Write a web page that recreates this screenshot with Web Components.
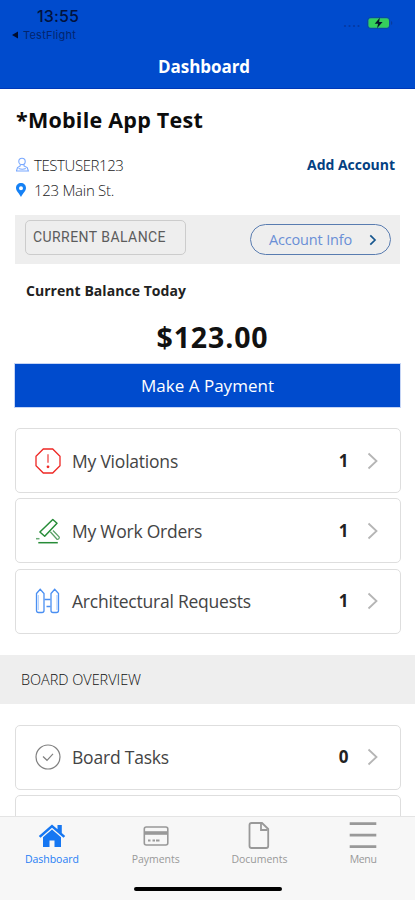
<!DOCTYPE html>
<html lang="en">
<head>
<meta charset="utf-8">
<title>Dashboard</title>
<style>
html,body{margin:0;height:100%;overflow:hidden;background:#fff}
</style>
</head>
<body>
<mobile-app></mobile-app>
<script>
const define = (name, html, Base = HTMLElement) => {
  const t = document.createElement('template');
  t.innerHTML = html;
  customElements.define(name, class extends Base {
    constructor() {
      super();
      this.attachShadow({ mode: 'open' }).append(t.content.cloneNode(true));
    }
  });
};

// One line of text whose tracking is adjusted to fill the width given in "w".
customElements.define('fit-text', class extends HTMLElement {
  constructor() {
    super();
    this.attachShadow({ mode: 'open' }).innerHTML = `<style>
  :host{display:block;white-space:nowrap;flex:none}
  span{display:inline-block}
</style><span><slot></slot></span>`;
  }
  connectedCallback() {
    const w = +this.getAttribute('w');
    this.style.width = w + 'px';
    const s = this.shadowRoot.querySelector('span');
    const n = this.shadowRoot.querySelector('slot').assignedNodes({ flatten: true })
      .reduce((a, x) => a + x.textContent.length, 0);
    if (n) s.style.letterSpacing = ((w - s.getBoundingClientRect().width) / n) + 'px';
  }
});

define('status-bar', `<style>
  :host{display:flex;justify-content:space-between;height:45px;color:#02123c;font-family:Inter,sans-serif}
  .l{padding:6px 0 0 12px}
  .time{font-size:16px;line-height:20px;font-weight:500;padding-left:25px}
  .back{display:flex;align-items:center;gap:5px;font-size:11px;line-height:18px}
  .back fit-text{color:#03256e}
  .r{display:flex;align-items:center;gap:6px;padding:0 22px 0 0;height:46px}
</style>
<div class="l">
  <fit-text class="time" w="42">13:55</fit-text>
  <div class="back"><svg width="6" height="8" viewBox="0 0 6 8"><path d="M6 .5v7L0 4z" fill="#000c2c"/></svg><fit-text w="53">TestFlight</fit-text></div>
</div>
<div class="r">
  <svg width="18" height="4" viewBox="0 0 18 4" fill="#0538a0" style="margin-top:6px"><circle cx="2" cy="2" r="1.1"/><circle cx="6.5" cy="2" r="1.1"/><circle cx="11" cy="2" r="1.1"/><circle cx="15.5" cy="2" r="1.1"/></svg>
  <svg width="26" height="12" viewBox="0 0 26 12"><rect x=".6" y=".6" width="22" height="10.8" rx="3" fill="none" stroke="#0b4a9c"/><rect x="1.4" y="1.2" width="20.6" height="9.6" rx="2.2" fill="#35cf5b"/><path d="M24.1 4v4q1.2-.6 1.2-2t-1.2-2z" fill="#0a3a98"/><path d="M12.8.8 7.7 6.7h3.4L10 11.2l5.6-6.3h-3.5z" fill="#06132b"/></svg>
</div>`);

define('app-header', `<style>
  :host{display:block;height:88.500px;background:#004bcd;box-sizing:border-box;border-bottom:1px solid #0038b8}
  .t{display:flex;justify-content:center;color:#fff;font:700 17px/44px "Open Sans",sans-serif;padding-right:7px}
</style><status-bar></status-bar><div class="t"><fit-text w="92"><slot></slot></fit-text></div>`);

define('account-summary', `<style>
  :host{display:block;padding:14px 20px 0 16px;height:112.500px;box-sizing:content-box}
  h1{margin:0;font:700 21.5px/34px "Open Sans",sans-serif;color:#0c0c0c}
  .rows{display:flex;justify-content:space-between;margin-top:16.500px}
  .row{display:flex;align-items:center;height:24.5px;gap:4px;font:300 15px/24px "Open Sans",sans-serif;color:#222}
  .row svg{flex:none}
  .add{font:700 14px/24px "Open Sans",sans-serif;color:#043f82}
</style>
<h1><fit-text w="187">*Mobile App Test</fit-text></h1>
<div class="rows">
  <div>
    <div class="row"><svg width="14" height="16" viewBox="0 0 14 16" fill="none" stroke="#78a8ff" stroke-width="1.1"><circle cx="6" cy="4.4" r="3.2"/><path d="M4.2 7.2v1.7L1.5 10.6.4 14h12l-1.2-3.4-3.2-1.7V7.2M2.6 11.5q3.6 1.500 7.200 0"/></svg><fit-text w="89.500">TESTUSER123</fit-text></div>
    <div class="row"><svg width="14" height="16" viewBox="0 0 14 16"><path fill="#1581f5" fill-rule="evenodd" d="M5 1C2.200 1 0 3 0 6c0 3 3.200 5.300 5 9 1.800-3.700 5-6 5-9 0-3-2.200-5-5-5zm0 3.300a2 2 0 1 1 0 4 2 2 0 0 1 0-4z"/></svg><fit-text w="80">123 Main St.</fit-text></div>
  </div>
  <fit-text class="add" w="88">Add Account</fit-text>
</div>`);

define('balance-bar', `<style>
  :host{display:flex;justify-content:space-between;align-items:flex-start;margin:0 15px;height:49px;background:#eee;box-sizing:border-box;padding:5px 9px 0 10px}
  .sel{box-sizing:border-box;width:161px;height:35px;border:1.500px solid #ccc;border-radius:5px;padding:0 7px;font:400 14px/33px Roboto,sans-serif;color:#5c5c5c}
  .pill{box-sizing:border-box;width:141px;height:31px;margin-top:4px;border:1px solid #597cb0;border-radius:16px;padding:0 13px 0 18px;display:flex;align-items:center;justify-content:space-between;font:400 14.500px/29px "Open Sans",sans-serif;color:#6a8fd6}
</style>
<div class="sel"><fit-text w="133">CURRENT BALANCE</fit-text></div>
<div class="pill"><fit-text w="83">Account Info</fit-text><svg width="8" height="12" viewBox="0 0 8 12" fill="none" stroke="#16568e" stroke-width="1.7"><path d="m1.300 1.300 4.700 4.700-4.700 4.700"/></svg></div>`);

define('balance-amount', `<style>
  :host{display:block;padding:0 15px}
  .k{padding:15px 0 0 11px;font:700 14px/24px "Open Sans",sans-serif;color:#222}
  .v{display:flex;justify-content:center;margin-top:12px;font:700 28.500px/44px "Open Sans",sans-serif;color:#111;padding-left:10px}
  button{display:flex;justify-content:center;width:100%;height:43px;margin:5px 0 0;padding:0;border:0;background:#004bcd;color:#fff;font:400 17px/43px "Open Sans",sans-serif;box-shadow:0 0 0 1px #c6d5f5;align-items:center}
</style>
<div class="k"><fit-text w="160">Current Balance Today</fit-text></div>
<div class="v"><fit-text w="112">$123.00</fit-text></div>
<button><fit-text w="133">Make A Payment</fit-text></button>`);

define('card-row', `<style>
  :host{display:flex;align-items:center;box-sizing:border-box;height:65px;margin:0 14.500px 5.400px 15px;border:1.500px solid #dedede;border-radius:5px;padding:0 21px 0 19px;font:400 17.500px/30px "Open Sans",sans-serif;color:#444;background:#fff}
  .i{width:26px;height:26px;margin-right:11px;flex:none}
  .g{flex:1}
  .n{font:700 17px/30px "Open Sans",sans-serif;color:#222;margin-right:18px}
</style>
<div class="i"><slot name="icon"></slot></div><slot></slot><span class="g"></span><span class="n"><slot name="count"></slot></span>
<svg width="12" height="18" viewBox="0 0 12 18" fill="none" stroke="#b5b5b5" stroke-width="1.800"><path d="m1.500 1.500 8 7.500-8 7.500"/></svg>`);

define('section-title', `<style>
  :host{display:block;height:49px;background:#eee;margin:21px 0;padding-left:21px;font:300 14.500px/49px "Open Sans",sans-serif;color:#111}
</style><fit-text w="120"><slot></slot></fit-text>`);

define('tab-item', `<style>
  :host{display:flex;flex-direction:column;align-items:center;color:#999;font:400 10.500px/14px "Open Sans",sans-serif}
  :host([active]){color:#267df5}
  .i{height:32px;margin-top:3px}
</style><div class="i"><slot name="icon"></slot></div><slot></slot>`);

define('tab-bar', `<style>
  :host{display:flex;flex-direction:column;position:absolute;left:0;right:0;bottom:0;height:84px;background:#f7f7f7;box-sizing:border-box;border-top:1px solid #e4e4e4}
  .tabs{display:grid;grid-template-columns:repeat(4,1fr);height:70px}
  .home{width:148px;height:4px;border-radius:2px;background:#000;margin:0 auto}
</style><div class="tabs"><slot></slot></div><div class="home"></div>`);

define('mobile-app', `<style>
  :host{display:block;position:relative;width:415px;height:900px;overflow:hidden;background:#fff}
  .cards{margin-top:21px}
  svg{display:block}
</style>
<app-header>Dashboard</app-header>
<account-summary></account-summary>
<balance-bar></balance-bar>
<balance-amount></balance-amount>
<div class="cards">
  <card-row><svg slot="icon" width="26" height="26" viewBox="0 0 26 26" fill="none" stroke="#ee2724" stroke-width="1.300"><path d="M8.300 1h9.400L25 8.300v9.400L17.700 25H8.300L1 17.700V8.300z"/><path d="M13 6.300v8.500" stroke="#f37c7c" stroke-width="1.800"/><circle cx="13" cy="18.800" r="1.400" fill="#ee2724" stroke="none"/></svg><fit-text w="106">My Violations</fit-text><span slot="count">1</span></card-row>
  <card-row><svg slot="icon" width="26" height="26" viewBox="0 0 26 26" fill="none" stroke="#278c38" stroke-width="1.500" stroke-linejoin="round"><path d="M17.800 1.500 22 5.300 9.700 18.300 4.900 14z"/><path d="M4.500 20.700H1" stroke="#6aac76"/><path d="m15.300 13.800 6.700 7.500q2.300.2 2.300-2.200L18 12.500" stroke="#5aa167" stroke-width="1.300"/><path d="M3.300 24.700h19.500"/></svg><fit-text w="130">My Work Orders</fit-text><span slot="count">1</span></card-row>
  <card-row><svg slot="icon" width="26" height="26" viewBox="0 0 26 26" fill="none" stroke="#4a8ff2" stroke-width="1.300"><path d="M1.500 5.500 5.200 1.300 9 5.500v17q0 2-2 2h-3.500q-2 0-2-2zM16 5.500l3.700-4.200 3.800 4.200v17q0 2-2 2H18q-2 0-2-2z"/><path d="M3.300 7v15M22 7v15" stroke="#b8d3fc"/><path d="M9.500 11.500h6M11.500 18.500h4"/></svg><fit-text w="179">Architectural Requests</fit-text><span slot="count">1</span></card-row>
</div>
<section-title>BOARD OVERVIEW</section-title>
<card-row><svg slot="icon" width="26" height="26" viewBox="0 0 26 26" fill="none" stroke="#808080" stroke-width="1.200"><circle cx="13" cy="13" r="12"/><path d="m8 12.500 4 3.800 6-6.500"/></svg><fit-text w="97">Board Tasks</fit-text><span slot="count">0</span></card-row>
<card-row></card-row>
<tab-bar>
  <tab-item active><svg slot="icon" width="28" height="30" viewBox="0 0 28 30" fill="#1677f2"><path d="M14 4.500.8 16l1.700 1.800L14 7.800l11.500 10 1.700-1.800-3.400-3V5h-4.300v4.300z"/><path d="M14 9.600 5 17.300V27h6.500v-6.500h5V27H23v-9.700z"/></svg><fit-text w="54">Dashboard</fit-text></tab-item>
  <tab-item><svg slot="icon" width="28" height="30" viewBox="0 0 28 30" fill="none" stroke="#999" stroke-width="1.600"><rect x="2.300" y="7" width="23.500" height="18" rx="2"/><path d="M2.300 13h23.500" stroke-width="3.600"/><path d="M6 20.500h2.500m2 0h2.500m1 0h3.500" stroke-width="2"/></svg><fit-text w="48">Payments</fit-text></tab-item>
  <tab-item><svg slot="icon" width="28" height="30" viewBox="0 0 28 30" fill="none" stroke="#999" stroke-width="1.800"><path d="M6.500 3H17l6.200 6v17q0 2-2 2H6.500q-2 0-2-2V5q0-2 2-2z"/><path d="M16 3.500V10h6.500"/></svg><fit-text w="56">Documents</fit-text></tab-item>
  <tab-item><svg slot="icon" width="28" height="30" viewBox="0 0 28 30" stroke="#999" stroke-width="2.800"><path d="M.7 3.700h26.600M.7 15.200h26.600M.7 26.700h26.600"/></svg><fit-text w="27">Menu</fit-text></tab-item>
</tab-bar>`);
</script>
</body>
</html>
